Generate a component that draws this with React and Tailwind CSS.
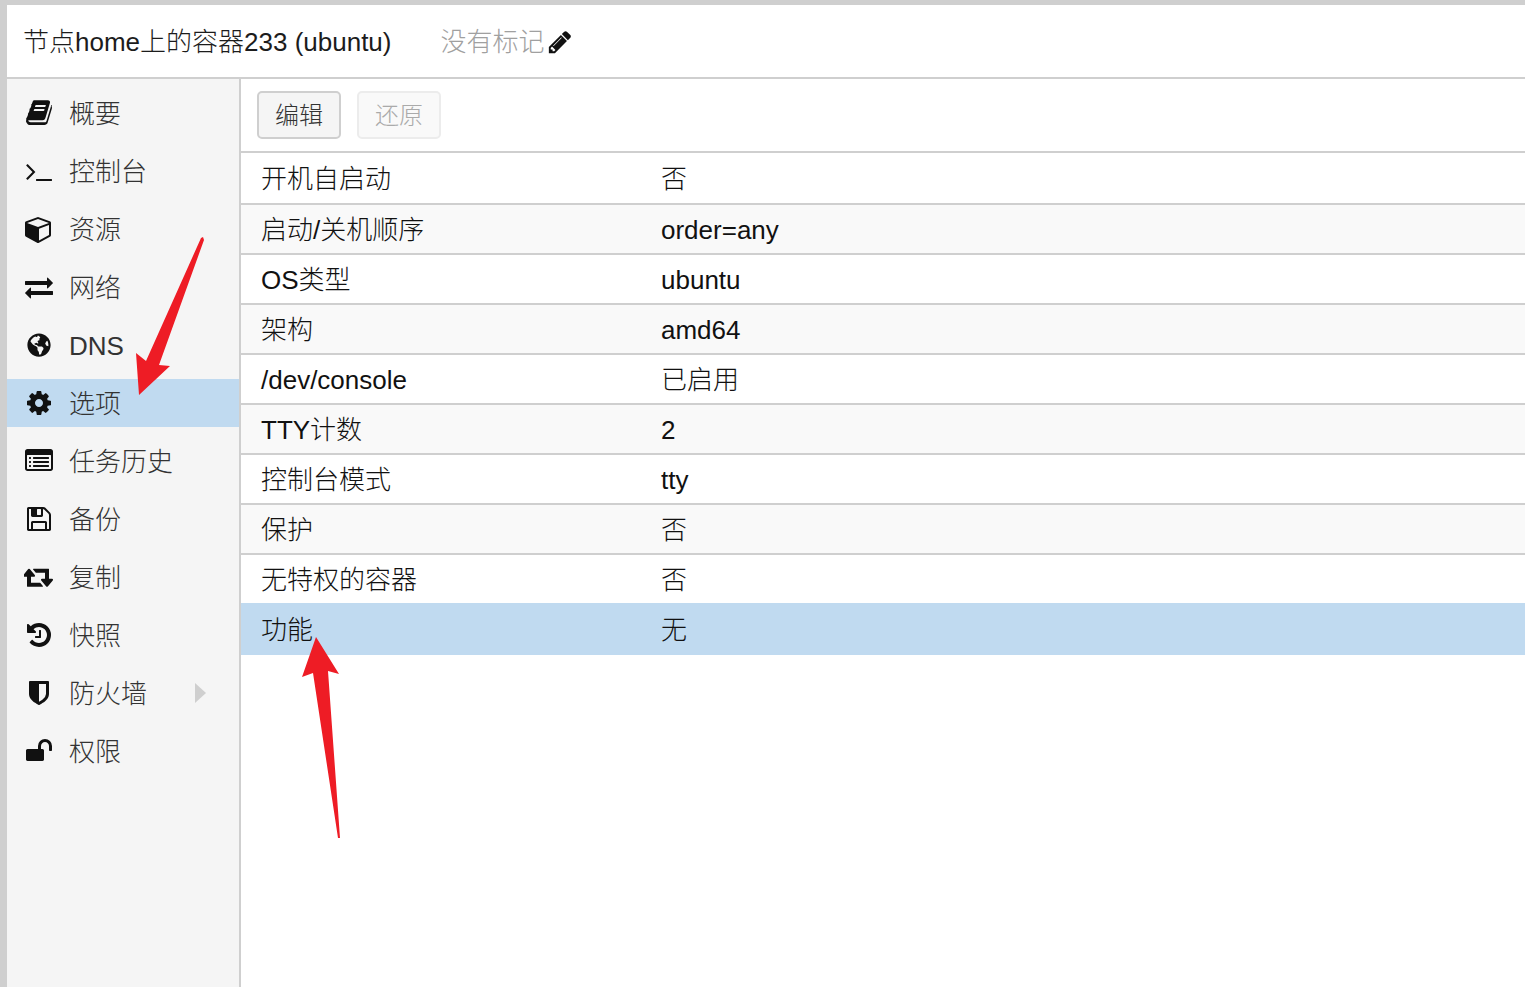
import React from "react";
import { FaGlobeAmericas } from "react-icons/fa";

const F = { fontFamily: '"Liberation Sans","Noto Sans CJK SC",sans-serif' };

const P = {
  book: "M1703 478q40 57 18 129l-275 906q-19 64-76.500 107.500t-122.500 43.500h-923q-77 0-148.500-53.500t-99.500-131.500q-24-67-2-127 0-4 3-27t4-37q1-8-3-21.500t-3-19.500q2-11 8-21t16.500-23.500 16.500-23.500q23-38 45-91.500t30-91.500q3-10 .5-30t-.5-28q3-11 17-28t17-23q21-36 42-92t25-90q1-9-2.500-32t.5-28q4-13 22-30.500t22-22.500q19-26 42.500-84.500t27.500-96.500q1-8-3-25.500t-2-26.500q2-8 9-18t18-23 17-21q8-12 16.500-35.500t15-45 17-45.500 21-39.500 28.500-33 39.500-15 50 0l-1 3q54-13 73-13h761q74 0 114 56t18 130l-274 906q-36 119-71.500 153.500t-128.500 34.500h-869q-27 0-38 15-11 16-1 43 24 70 144 70h923q29 0 56-15.500t35-41.500l300-987q7-22 5-57 38 15 59 43zm-1064 2q-4 13 2 22.500t20 9.500h608q13 0 25.500-9.500t16.500-22.500l21-64q4-13-2-22.500t-20-9.500h-608q-13 0-25.500 9.500t-16.500 22.500zm-83 256q-4 13 2 22.500t20 9.500h608q13 0 25.500-9.500t16.500-22.500l21-64q4-13-2-22.500t-20-9.500h-608q-13 0-25.500 9.500t-16.500 22.500z",
  terminal: "M649 983l-466 466q-10 10-23 10t-23-10l-50-50q-10-10-10-23t10-23l393-393-393-393q-10-10-10-23t10-23l50-50q10-10 23-10t23 10l466 466q10 10 10 23t-10 23zm1079 457v64q0 14-9 23t-23 9h-960q-14 0-23-9t-9-23v-64q0-14 9-23t23-9h960q14 0 23 9t9 23z",
  cube: "M896 1629l640-349v-636l-640 233v752zm-64-865l698-254-698-254-698 254zm832-252v768q0 35-18 65t-49 47l-704 384q-28 16-61 16t-61-16l-704-384q-31-17-49-47t-18-65v-768q0-40 23-73t61-47l704-256q22-8 44-8t44 8l704 256q38 14 61 47t23 73z",
  exchange: "M1792 1184v192q0 13-9.500 22.500t-22.500 9.500h-1376v192q0 13-9.500 22.500t-22.500 9.500q-12 0-24-10l-319-320q-9-9-9-22 0-14 9-23l320-320q9-9 23-9 13 0 22.500 9.500t9.500 22.500v192h1376q13 0 22.500 9.500t9.500 22.500zm0-544q0 14-9 23l-320 320q-9 9-23 9-13 0-22.500-9.500t-9.500-22.500v-192h-1376q-13 0-22.500-9.500t-9.500-22.500v-192q0-13 9.500-22.500t22.500-9.500h1376v-192q0-14 9-23t23-9q12 0 24 10l319 319q9 9 9 23z",
  cog: "M1152 896q0-106-75-181t-181-75-181 75-75 181 75 181 181 75 181-75 75-181zm512-109v222q0 12-8 23t-20 13l-185 28q-19 54-39 91 35 50 107 138 10 12 10 25t-9 23q-27 37-99 108t-94 71q-12 0-26-9l-138-108q-44 23-91 38-16 136-29 186-7 28-36 28h-222q-14 0-24.500-8.500t-11.500-21.500l-28-184q-49-16-90-37l-141 107q-10 9-25 9-14 0-25-11-126-114-165-168-7-10-7-23 0-12 8-23 15-21 51-66.500t54-70.500q-27-50-41-99l-183-27q-13-2-21-12.500t-8-23.500v-222q0-12 8-23t19-13l186-28q14-46 39-92-40-57-107-138-10-12-10-24 0-10 9-23 26-36 98.500-107.500t94.500-71.500q13 0 26 10l138 107q44-23 91-38 16-136 29-186 7-28 36-28h222q14 0 24.500 8.500t11.500 21.500l28 184q49 16 90 37l142-107q9-9 24-9 13 0 25 10 129 119 165 170 7 8 7 22 0 12-8 23-15 21-51 66.500t-54 70.500q26 50 41 98l183 28q13 2 21 12.500t8 23.500z",
  list: "M384 1184v64q0 13-9.500 22.500t-22.500 9.500h-64q-13 0-22.500-9.500t-9.500-22.500v-64q0-13 9.500-22.500t22.500-9.500h64q13 0 22.500 9.500t9.500 22.500zm0-256v64q0 13-9.500 22.500t-22.500 9.500h-64q-13 0-22.500-9.500t-9.500-22.500v-64q0-13 9.500-22.500t22.500-9.500h64q13 0 22.500 9.500t9.500 22.500zm0-256v64q0 13-9.500 22.500t-22.500 9.500h-64q-13 0-22.500-9.500t-9.500-22.500v-64q0-13 9.500-22.500t22.500-9.500h64q13 0 22.500 9.500t9.500 22.500zm1152 512v64q0 13-9.500 22.500t-22.500 9.500h-960q-13 0-22.500-9.500t-9.500-22.500v-64q0-13 9.500-22.500t22.500-9.500h960q13 0 22.500 9.500t9.500 22.500zm0-256v64q0 13-9.500 22.500t-22.500 9.500h-960q-13 0-22.500-9.500t-9.500-22.500v-64q0-13 9.500-22.500t22.500-9.500h960q13 0 22.500 9.500t9.500 22.500zm0-256v64q0 13-9.500 22.500t-22.500 9.500h-960q-13 0-22.500-9.500t-9.500-22.500v-64q0-13 9.500-22.500t22.500-9.500h960q13 0 22.500 9.500t9.500 22.500zm128 704v-832q0-13-9.500-22.500t-22.500-9.500h-1472q-13 0-22.500 9.500t-9.500 22.500v832q0 13 9.500 22.500t22.500 9.500h1472q13 0 22.500-9.500t9.500-22.500zm128-1088v1088q0 66-47 113t-113 47h-1472q-66 0-113-47t-47-113v-1088q0-66 47-113t113-47h1472q66 0 113 47t47 113z",
  save: "M512 1536h768v-384h-768v384zm896 0h128v-896q0-14-10-38.500t-20-34.500l-281-281q-10-10-34-20t-39-10v416q0 40-28 68t-68 28h-576q-40 0-68-28t-28-68v-416h-128v1280h128v-416q0-40 28-68t68-28h832q40 0 68 28t28 68v416zm-384-928v-320q0-13-9.500-22.500t-22.500-9.500h-192q-13 0-22.500 9.500t-9.500 22.500v320q0 13 9.500 22.500t22.500 9.500h192q13 0 22.500-9.500t9.500-22.500zm640 32v928q0 40-28 68t-68 28h-1344q-40 0-68-28t-28-68v-1344q0-40 28-68t68-28h928q40 0 88 20t76 48l280 280q28 28 48 76t20 88z",
  retweet: "M1216 1488q0 13-9.500 22.500t-22.500 9.500h-960q-8 0-13.500-2t-9-7-5.500-8-3-11.500-1-11.500v-600h-192q-26 0-45-19t-19-45q0-24 15-41l320-384q19-22 49-22t49 22l320 384q15 17 15 41 0 26-19 45t-45 19h-192v384h576q16 0 25 11l160 192q7 10 7 21zm640-416q0 24-15 41l-320 384q-20 23-49 23t-49-23l-320-384q-15-17-15-41 0-26 19-45t45-19h192v-384h-576q-16 0-25-12l-160-192q-7-9-7-20 0-13 9.500-22.500t22.500-9.500h960q8 0 13.500 2t9 7 5.500 8 3 11.500 1 11.500v600h192q26 0 45 19t19 45z",
  history: "M1664 896q0 156-61 298t-164 245-245 164-298 61q-172 0-327-72.500t-264-204.500q-7-10-6.500-22.500t8.500-20.500l137-138q10-9 25-9 16 2 23 12 73 95 179 147t225 52q104 0 198.500-40.500t163.500-109.500 109.500-163.500 40.500-198.500-40.500-198.500-109.500-163.500-163.500-109.500-198.500-40.500q-98 0-188 35.500t-160 101.500l137 138q31 30 14 69-17 40-59 40h-448q-26 0-45-19t-19-45v-448q0-42 40-59 39-17 69 14l130 129q107-101 244.500-156.500t284.500-55.500q156 0 298 61t245 164 164 245 61 298zm-640-288v448q0 14-9 23t-23 9h-320q-14 0-23-9t-9-23v-64q0-14 9-23t23-9h224v-352q0-14 9-23t23-9h64q14 0 23 9t9 23z",
  shield: "M1344 960v-640h-448v1137q119-63 213-137 235-184 235-360zm192-768v768q0 86-33.500 170.500t-83 150-118 127.500-126.500 103-121 77.500-89.500 49.500-42.500 20q-12 6-26 6t-26-6q-16-7-42.500-20t-89.500-49.500-121-77.500-126.500-103-118-127.500-83-150-33.500-170.500v-768q0-26 19-45t45-19h1152q26 0 45 19t19 45z",
  unlock: "M1728 576v256q0 26-19 45t-45 19h-64q-26 0-45-19t-19-45v-256q0-106-75-181t-181-75-181 75-75 181v192h96q40 0 68 28t28 68v576q0 40-28 68t-68 28h-960q-40 0-68-28t-28-68v-576q0-40 28-68t68-28h672v-192q0-185 131.500-316.500t316.500-131.500 316.500 131.500 131.500 316.500z",
  pencil: "M491 1536l91-91-235-235-91 91v107h128v128h107zm523-928q0-22-22-22-10 0-17 7l-542 542q-7 7-7 17 0 22 22 22 10 0 17-7l542-542q7-7 7-17zm-54-192l416 416-832 832h-416v-416zm683 96q0 53-37 90l-166 166-416-416 166-165q36-38 90-38 53 0 91 38l235 234q37 39 37 91z",
};

const Fa = ({ d, className, vb = "0 0 1792 1792" }) => (
  <svg viewBox={vb} className={className}>
    <path fill="currentColor" d={d} />
  </svg>
);

const nav = [
  [<Fa d={P.book} className="h-[28px] w-[28px]" />, "概要"],
  [<Fa d={P.terminal} className="h-[28px] w-[28px]" />, "控制台"],
  [<Fa d={P.cube} className="h-[28px] w-[28px]" />, "资源"],
  [<Fa d={P.exchange} className="h-[28px] w-[28px]" />, "网络"],
  [<FaGlobeAmericas className="h-[24px] w-[24px]" />, "DNS"],
  [<Fa d={P.cog} className="h-[28px] w-[28px]" />, "选项", true],
  [<Fa d={P.list} className="h-[28px] w-[28px]" />, "任务历史"],
  [<Fa d={P.save} className="h-[28px] w-[28px]" />, "备份"],
  [<Fa d={P.retweet} vb="0 0 1920 1792" className="h-[28px] w-[30px]" />, "复制"],
  [<Fa d={P.history} className="h-[28px] w-[28px]" />, "快照"],
  [<Fa d={P.shield} className="h-[28px] w-[28px]" />, "防火墙", false, true],
  [<Fa d={P.unlock} className="h-[28px] w-[28px]" />, "权限"],
];

const rows = [
  ["开机自启动", "否"],
  ["启动/关机顺序", "order=any"],
  ["OS类型", "ubuntu"],
  ["架构", "amd64"],
  ["/dev/console", "已启用"],
  ["TTY计数", "2"],
  ["控制台模式", "tty"],
  ["保护", "否"],
  ["无特权的容器", "否"],
  ["功能", "无"],
];

export default function App() {
  return (
    <div style={F} className="relative h-[987px] w-[1525px] overflow-hidden bg-[#cfcfcf] pl-[7px] pt-[5px] text-[26px] text-[#111]">
      <div className="flex h-full flex-col bg-white">
        <header className="flex h-[74px] shrink-0 items-center border-b-2 border-[#cfcfcf] pt-[2px] pl-[16px]">
          <span className="font-light text-[#1c1c1c]">节点home上的容器233 (ubuntu)</span>
          <span className="ml-[49px] font-light text-[#a0a0a0]">没有标记</span>
          <Fa d={P.pencil} className="ml-[2px] h-[26px] w-[26px] text-[#111]" />
        </header>
        <div className="flex min-h-0 flex-1">
          <aside className="flex w-[234px] shrink-0 flex-col gap-[10px] border-r-2 border-[#cfcfcf] bg-[#f5f5f5] pt-[10px]">
            {nav.map(([icon, label, selected, arrow]) => (
              <div key={label} className={`flex h-[48px] shrink-0 items-center ${selected ? "bg-[#c0daf0]" : ""}`}>
                <span className="flex w-[62px] shrink-0 justify-center pl-[1px] text-[#111]">{icon}</span>
                <span className="pt-[2px] font-light text-[#333]">{label}</span>
                {arrow && (
                  <svg viewBox="0 0 11 20" className="ml-[48px] h-[20px] w-[11px] text-[#cfcfcf]">
                    <path fill="currentColor" d="M0 0 11 10 0 20Z" />
                  </svg>
                )}
              </div>
            ))}
          </aside>
          <main className="min-w-0 flex-1">
            <div className="flex h-[74px] items-center gap-[16px] border-b-2 border-[#cfcfcf] pl-[16px]">
              <button className="h-[48px] w-[84px] rounded-[5px] border-2 border-[#cfcfcf] bg-[#f5f5f5] pt-[2px] text-[24px] font-light text-[#333]">编辑</button>
              <button className="h-[48px] w-[84px] rounded-[5px] border-2 border-[#ececec] bg-[#f9f9f9] pt-[2px] text-[24px] font-light text-[#aaa]">还原</button>
            </div>
            {rows.map(([k, v], i) => {
              const sel = i === 9;
              return (
                <div key={k} className={`flex items-center pl-[20px] pt-[3px] ${sel ? "-mt-[2px] h-[52px] bg-[#c0daf0]" : i === 0 ? "h-[52px] border-b-2 border-[#cfcfcf]" : `h-[50px] border-b-2 border-[#cfcfcf] ${i % 2 ? "bg-[#f9f9f9]" : "bg-white"}`}`}>
                  <span className="w-[400px] shrink-0 font-light text-[#111]">{k}</span>
                  <span className="font-light text-[#111]">{v}</span>
                </div>
              );
            })}
          </main>
        </div>
      </div>
      <svg className="pointer-events-none absolute left-0 top-0" width="1525" height="987" viewBox="0 0 1525 987">
        <path fill="#ee1c25" d="M203 237 204 240 159 365 170 366 139 395 136 353 146 361 201 238Z" />
        <path fill="#ee1c25" d="M316 637 339 674 328 671 340 838 338 838 313 673 302 677Z" />
      </svg>
    </div>
  );
}
